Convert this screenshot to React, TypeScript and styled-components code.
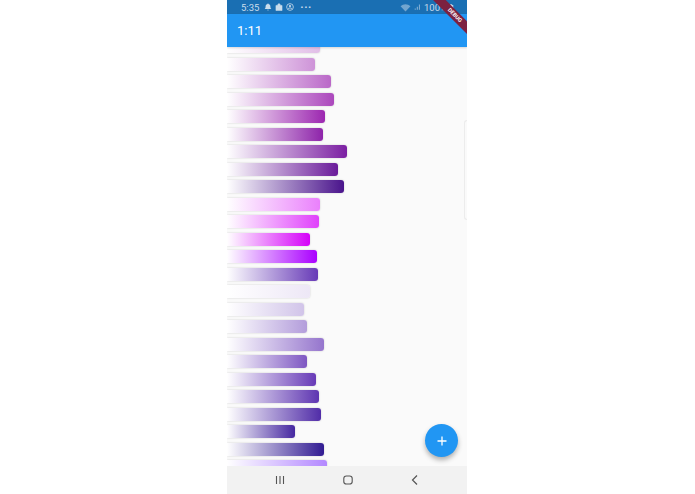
import styled, { createGlobalStyle } from "styled-components";

const bars = [
    { end: 93, color: "#e1bee7" },
    { end: 88, color: "#ce93d8" },
    { end: 104, color: "#ba68c8" },
    { end: 107, color: "#ab47bc" },
    { end: 98, color: "#9c27b0" },
    { end: 96, color: "#8e24aa" },
    { end: 120, color: "#7b1fa2" },
    { end: 111, color: "#6a1b9a" },
    { end: 117, color: "#4a148c" },
    { end: 93, color: "#ea80fc" },
    { end: 92, color: "#e040fb" },
    { end: 83, color: "#d500f9" },
    { end: 90, color: "#aa00ff" },
    { end: 91, color: "#673ab7" },
    { end: 83, color: "#ede7f6" },
    { end: 77, color: "#d1c4e9" },
    { end: 80, color: "#b39ddb" },
    { end: 97, color: "#9575cd" },
    { end: 80, color: "#7e57c2" },
    { end: 89, color: "#673ab7" },
    { end: 92, color: "#5e35b1" },
    { end: 94, color: "#512da8" },
    { end: 68, color: "#4527a0" },
    { end: 97, color: "#311b92" },
    { end: 100, color: "#b388ff" },
];

const App = () => {
    return (
        <>
            <GlobalStyle />
            <Page>
                <Phone>
                    <StatusBar>
                        <StatusGroup>
                            <Clock>5:35</Clock>
                            <StatusIcon viewBox="0 0 10 10" width="8" height="8">
                                <path d="M5 .6a1 1 0 0 1 1 .9c1.4.4 2 1.5 2 2.9 0 1.5.4 2.2 1.2 3H.8c.8-.8 1.2-1.5 1.2-3 0-1.400.6-2.500 2-2.900a1 1 0 0 1 1-.9zM4 8.500h2a1 1 0 0 1-2 0z" fill="currentColor" />
                            </StatusIcon>
                            <StatusIcon viewBox="0 0 10 10" width="8" height="8">
                                <path d="M1.200 3h7.600v6.500H1.200zM3.300 3c0-2.800 3.400-2.800 3.400 0" fill="currentColor" stroke="currentColor" strokeWidth=".7" />
                            </StatusIcon>
                            <StatusIcon viewBox="0 0 10 10" width="8" height="8">
                                <circle cx="5" cy="5" r="4.200" fill="none" stroke="currentColor" strokeWidth="1" />
                                <circle cx="5" cy="3.800" r="1.400" fill="currentColor" />
                                <path d="M2.500 7.300c1-1.500 4-1.500 5 0" fill="none" stroke="currentColor" />
                            </StatusIcon>
                            <Dots>···</Dots>
                        </StatusGroup>
                        <StatusGroup>
                            <StatusIcon viewBox="0 0 12 10" width="11" height="9">
                                <path d="M.5 3.500C3.500.5 8.500.5 11.500 3.500L6 9.500z" fill="currentColor" fillOpacity=".5" />
                            </StatusIcon>
                            <StatusIcon viewBox="0 0 10 10" width="7" height="8">
                                <path d="M1 9h1.500V7H1zM4 9h1.500V4.500H4zM7 9h1.500V1.500H7z" fill="currentColor" fillOpacity=".6" />
                            </StatusIcon>
                            <Percent>100%</Percent>
                            <StatusIcon viewBox="0 0 8 10" width="6" height="9">
                                <path d="M2.500.5h3v1H7v8.500H1V1.500h1.500z" fill="currentColor" />
                            </StatusIcon>
                        </StatusGroup>
                    </StatusBar>
                    <AppBar>
                        <Title>1:11</Title>
                    </AppBar>
                    <ListArea>
                        <BarList>
                            {bars.map((bar) => (
                                <GradientBar key={bar.color + bar.end} $end={bar.end} $color={bar.color} />
                            ))}
                        </BarList>
                        <DrawerEdge />
                        <Fab aria-label="Adicionar">
                            <svg viewBox="0 0 12 12" width="12" height="12">
                                <path d="M6 1.500v9M1.500 6h9" stroke="#fff" strokeWidth="1.300" />
                            </svg>
                        </Fab>
                    </ListArea>
                    <NavBar>
                        <svg viewBox="0 0 12 12" width="12" height="12">
                            <path d="M2.500 2v8M6 2v8M9.500 2v8" stroke="#555" strokeWidth="1.100" />
                        </svg>
                        <svg viewBox="0 0 12 12" width="12" height="12">
                            <rect x="1.800" y="2" width="8.400" height="8" rx="2.600" fill="none" stroke="#555" strokeWidth="1.100" />
                        </svg>
                        <svg viewBox="0 0 12 12" width="12" height="12">
                            <path d="M8 1.500L3.500 6 8 10.500" fill="none" stroke="#555" strokeWidth="1.200" />
                        </svg>
                    </NavBar>
                    <DebugBanner>DEBUG</DebugBanner>
                </Phone>
            </Page>
        </>
    );
};

export default App;

const GlobalStyle = createGlobalStyle`
    html, body {
        margin: 0;
        background: #fff;
        font-family: Roboto, "Liberation Sans", sans-serif;
    }
`;

const Page = styled.div`
    display: flex;
    width: 695px;
    height: 494px;
    padding-left: 227px;
    box-sizing: border-box;
    overflow: hidden;
    background: #fff;
`;

const Phone = styled.div`
    position: relative;
    display: flex;
    flex-direction: column;
    width: 240px;
    height: 494px;
    overflow: hidden;
    background: #fafafa;
`;

const StatusBar = styled.div`
    display: flex;
    flex: none;
    align-items: center;
    justify-content: space-between;
    height: 14px;
    padding: 0 13px 0 14px;
    background: #1a6fb3;
    color: #c9dcec;
    font-size: 9.5px;
`;

const StatusGroup = styled.div`
    display: flex;
    align-items: center;
    gap: 3px;
`;

const Clock = styled.span`
    margin-right: 2px;
`;

const Percent = styled.span`
    margin-right: -2px;
    font-size: 9.5px;
`;

const Dots = styled.span`
    margin-left: 3px;
    font-size: 11px;
    font-weight: 700;
    letter-spacing: 0.5px;
`;

const StatusIcon = styled.svg`
    display: block;
`;

const AppBar = styled.header`
    position: relative;
    z-index: 2;
    display: flex;
    flex: none;
    align-items: center;
    height: 33px;
    padding: 0 10px;
    background: #2196f3;
    box-shadow: 0 1px 2px rgba(0, 0, 0, 0.15);
`;

const Title = styled.h1`
    margin: 0;
    color: #fff;
    font-size: 13px;
    font-weight: 400;
`;

const ListArea = styled.main`
    position: relative;
    flex: 1;
    min-height: 0;
    overflow: hidden;
`;

const BarList = styled.div`
    display: flex;
    flex-direction: column;
    gap: 4.5px;
    margin-top: -7px;
`;

const GradientBar = styled.div<{ $end: number; $color: string }>`
    flex: none;
    width: ${(props) => props.$end}px;
    height: 13px;
    border-radius: 0 3px 3px 0;
    background: linear-gradient(to right, #fff, ${(props) => props.$color});
    box-shadow: 0 0 2px rgba(0, 0, 0, 0.2);
`;

const DrawerEdge = styled.div`
    position: absolute;
    top: 73px;
    right: 0;
    width: 2px;
    height: 98px;
    border: 1px solid #ececec;
    border-right: none;
    border-radius: 3px 0 0 3px;
    background: #fafafa;
`;

const Fab = styled.button`
    position: absolute;
    right: 9px;
    bottom: 9px;
    display: flex;
    align-items: center;
    justify-content: center;
    width: 33px;
    height: 33px;
    padding: 0;
    border: none;
    border-radius: 50%;
    background: #2196f3;
    box-shadow: 0 3px 5px rgba(0, 0, 0, 0.3);
`;

const NavBar = styled.nav`
    display: flex;
    flex: none;
    align-items: center;
    justify-content: space-between;
    height: 28px;
    padding: 0 46px 0 47px;
    background: #f2f2f2;
`;

const DebugBanner = styled.div`
    position: absolute;
    top: 11px;
    right: -18px;
    z-index: 3;
    width: 60px;
    height: 8.500px;
    background: #7c2140;
    color: #fff;
    font-size: 5.500px;
    font-weight: 700;
    line-height: 8.500px;
    text-align: center;
    transform: rotate(45deg);
`;
